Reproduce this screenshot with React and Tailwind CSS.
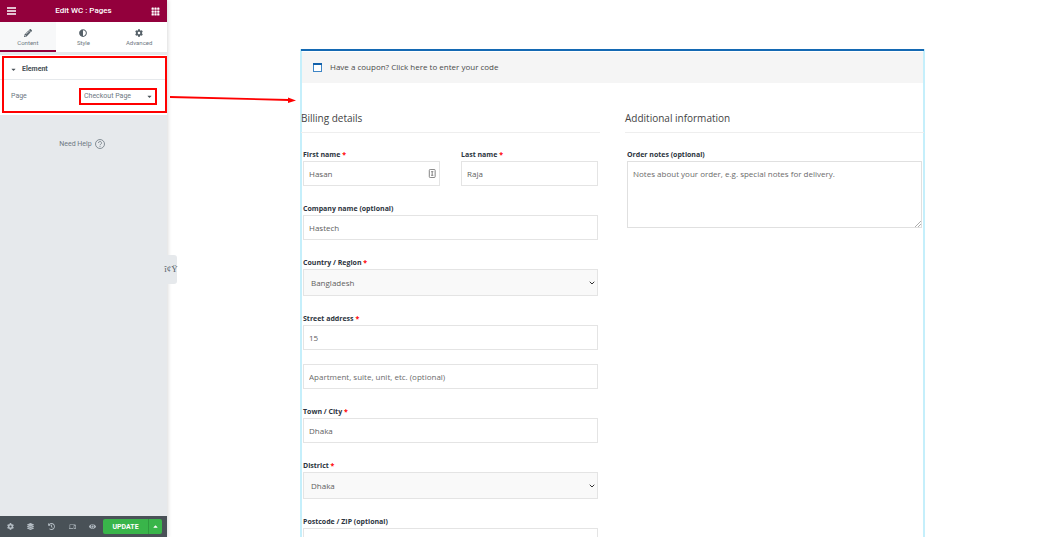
import { useState } from "react";
import { FaPencilAlt, FaAdjust, FaCog, FaLayerGroup, FaHistory, FaEye, FaCaretDown, FaCaretUp } from "react-icons/fa";
import { BsGrid3X3GapFill } from "react-icons/bs";
import { MdDevices } from "react-icons/md";
import { FiChevronDown } from "react-icons/fi";

const tabs = [
  { name: "Content", icon: FaPencilAlt },
  { name: "Style", icon: FaAdjust },
  { name: "Advanced", icon: FaCog },
];

const tools = [
  { name: "Settings", icon: FaCog },
  { name: "Navigator", icon: FaLayerGroup },
  { name: "History", icon: FaHistory },
  { name: "Responsive", icon: MdDevices },
  { name: "Preview", icon: FaEye },
];

const inputClass =
  "block w-full h-[25px] px-[5px] border border-[#e4e4e4] bg-white text-[#606060] placeholder-[#6b6b6b] outline-none";

function Label({ id, text, required }) {
  return (
    <label htmlFor={id} className="block h-[14px] leading-[16px] text-[7px] font-bold text-[#2c3440]">
      {text}
      {required && <span className="text-[#ff0000]"> *</span>}
    </label>
  );
}

function Field({ id, label, required, value, children }) {
  return (
    <div className="relative">
      <Label id={id} text={label} required={required} />
      <input id={id} className={inputClass} defaultValue={value} />
      {children}
    </div>
  );
}

function SelectField({ id, label, options }) {
  return (
    <div>
      <Label id={id} text={label} required />
      <div className="relative">
        <select
          id={id}
          className="block w-full h-[27px] appearance-none border border-[#e4e4e4] bg-[#f9f9f9] px-[7px] text-[#606060] outline-none"
        >
          {options.map((o) => (
            <option key={o}>{o}</option>
          ))}
        </select>
        <FiChevronDown className="pointer-events-none absolute right-[2px] top-[10px] size-[8px] stroke-[3] text-[#333]" />
      </div>
    </div>
  );
}

function Sidebar() {
  const [active, setActive] = useState("Content");

  return (
    <aside className="relative z-10 flex w-[167px] shrink-0 flex-col bg-[#e6e9ec] font-['Roboto',sans-serif] text-[7px] text-[#6d7882] shadow-[1px_0_4px_rgba(0,0,0,0.15)]">

      <header className="flex h-[22px] items-center justify-between bg-[#93003c] px-[7px] text-white">
        <button aria-label="Menu">
          <svg viewBox="0 0 9 8" className="h-2 w-[9px]" stroke="currentColor" strokeWidth="1.3">
            <path d="M0 1h9M0 4h9M0 7h9" />
          </svg>
        </button>
        <h1 className="text-[8px] font-medium">Edit WC : Pages</h1>
        <button aria-label="Widgets">
          <BsGrid3X3GapFill className="size-[9px]" />
        </button>
      </header>

      <nav className="grid h-[30px] grid-cols-3 bg-white">
        {tabs.map(({ name, icon: Icon }) => (
          <button
            key={name}
            onClick={() => setActive(name)}
            className={
              active === name
                ? "flex flex-col items-center gap-[2px] border-b-2 border-[#93003c] bg-[#f7f8f9] pt-[7px]"
                : "flex flex-col items-center gap-[2px] border-b-2 border-transparent pt-[7px]"
            }
          >
            <Icon className="size-[8px] text-[#556068]" />
            <span className="text-[6px] leading-[8px]">{name}</span>
          </button>
        ))}
      </nav>

      <section className="relative mt-[3px] bg-white">
        <h2 className="flex h-[25px] items-center gap-[5px] border-b border-[#e6e9ec] pl-[10px] pt-[4px] font-bold text-[#495157]">
          <FaCaretDown className="size-[7px]" />
          Element
        </h2>
        <div className="flex h-[35px] items-center justify-between pb-[3px] pl-[11px] pr-[10px]">
          <label htmlFor="page">Page</label>
          <div className="relative">
            <select
              id="page"
              className="block h-[17px] w-[78px] appearance-none border-2 border-[#ff0000] bg-white px-[3px] pt-px text-[#6d7882] outline-none"
            >
              <option>Checkout Page</option>
              <option>Cart Page</option>
            </select>
            <FaCaretDown className="pointer-events-none absolute right-1 top-[5px] size-[7px] text-[#495157]" />
          </div>
        </div>
        {/* highlight around the element settings */}
        <div className="pointer-events-none absolute bottom-[2px] left-[2px] right-0 top-px border-2 border-[#ff0000]" />
      </section>

      <a href="#help" className="mt-6 flex items-center justify-center gap-[3px] pr-[3px]">
        Need Help
        <svg viewBox="0 0 20 20" className="size-[10px]" fill="none" stroke="currentColor" strokeWidth="1.6">
          <circle cx="10" cy="10" r="9" />
          <path d="M7 8a3 3 0 1 1 4.5 2.5C10.400 11 10 11.500 10 12.500M10 14.300v1.700" />
        </svg>
      </a>

      <footer className="mt-auto flex h-[21px] items-center bg-[#495157] pr-[5px] text-[#b4bdc4]">
        <div className="flex flex-1 items-center justify-around">
          {tools.map(({ name, icon: Icon }) => (
            <button key={name} aria-label={name}>
              <Icon className="size-[7px]" />
            </button>
          ))}
        </div>
        <button className="h-[15px] w-[45px] rounded-l-[2px] bg-[#39b54a] pt-px font-bold text-white">UPDATE</button>
        <button aria-label="Save options" className="flex h-[15px] w-[14px] items-center justify-center rounded-r-[2px] border-l border-[#2f9a3e] bg-[#39b54a] text-white">
          <FaCaretUp className="size-[7px]" />
        </button>
      </footer>

      {/* collapse handle */}
      <button className="absolute left-[165px] top-[255px] flex h-[29px] w-3 items-center justify-center rounded-r-[3px] bg-[#e6e9ec] pt-px font-['Liberation_Serif',serif] text-[9px] text-[#556068]">
        î¢Ÿ
      </button>
    </aside>
  );
}

function Checkout() {
  return (
    <main className="min-w-0 flex-1 overflow-hidden pl-[133px] pr-[124px] pt-[49px] font-['Open_Sans',sans-serif] text-[8px] text-[#4a4a4a]">
      <div className="min-h-full px-px shadow-[inset_2px_0_#c5effb,inset_-2px_0_#c5effb]">

        <div className="border-t-2 border-[#1469b3]">
          <div className="mx-px flex h-8 items-center gap-2 border-t border-white bg-[#f5f5f5] pl-[11px] pb-px">
            <svg viewBox="0 0 9 9" className="size-[9px]" fill="none">
              <rect x=".5" y=".5" width="8" height="8" fill="#fff" stroke="#3f86c6" />
              <path d="M0 1h9" stroke="#1261ab" strokeWidth="2" />
            </svg>
            <p>
              Have a coupon? <a href="#coupon">Click here to enter your code</a>
            </p>
          </div>
        </div>

        <form className="mt-6 grid grid-cols-2 gap-[25px]">

          <section>
            <h3 className="h-[26px] border-b border-[#eeeeee] text-[10px] leading-[22px] text-[#444]">
              Billing details
            </h3>

            <div className="mt-[14px] space-y-[15px] px-[2px]">
              <div className="grid grid-cols-2 gap-[21px]">
                <Field id="first" label="First name" required value="Hasan">
                  <svg viewBox="0 0 8 10" className="absolute bottom-[8px] right-1 h-[9px] w-[8px]" fill="none" stroke="#777">
                    <rect x="1" y=".5" width="6.5" height="9" rx="1" />
                    <path d="M3 3h2.500M4.200 3v4M3 7h2.500" />
                  </svg>
                </Field>
                <Field id="last" label="Last name" required value="Raja" />
              </div>
              <Field id="company" label="Company name (optional)" value="Hastech" />
              <SelectField id="country" label="Country / Region" options={["Bangladesh", "India"]} />
              <div>
                <Field id="street" label="Street address" required value="15" />
                <input
                  aria-label="Apartment"
                  className={inputClass + " mt-[14px]"}
                  placeholder="Apartment, suite, unit, etc. (optional)"
                />
              </div>
              <Field id="city" label="Town / City" required value="Dhaka" />
              <SelectField id="district" label="District" options={["Dhaka", "Khulna"]} />
              <Field id="postcode" label="Postcode / ZIP (optional)" />
            </div>
          </section>

          <section>
            <h3 className="h-[26px] border-b border-[#eeeeee] text-[10px] leading-[22px] text-[#444]">
              Additional information
            </h3>

            <div className="mt-[14px] px-[2px]">
              <Label id="notes" text="Order notes (optional)" />
              <div className="relative">
                <textarea
                  id="notes"
                  className="block h-[67px] w-full resize-none border border-[#e0e0e0] px-[5px] py-[6px] text-[#606060] placeholder-[#6b6b6b] outline-none"
                  placeholder="Notes about your order, e.g. special notes for delivery."
                />
                {/* resize grip */}
                <svg viewBox="0 0 6 6" className="pointer-events-none absolute bottom-px right-px size-[6px]" stroke="#999" strokeWidth=".8">
                  <path d="M0 6L6 0M3 6L6 3" />
                </svg>
              </div>
            </div>
          </section>

        </form>
      </div>
    </main>
  );
}

export default function App() {
  return (
    <div className="relative flex h-screen overflow-hidden bg-white">
      <Sidebar />
      <Checkout />

      {/* arrow from the panel to the form */}
      <svg viewBox="0 0 128 12" className="pointer-events-none absolute left-[169px] top-[93px] z-20 h-3 w-32" fill="#ff0000">
        <path d="M1 4L120 7" stroke="#ff0000" strokeWidth="1.8" />
        <path d="M119 4.500L127 7.500L119 10z" />
      </svg>
    </div>
  );
}
